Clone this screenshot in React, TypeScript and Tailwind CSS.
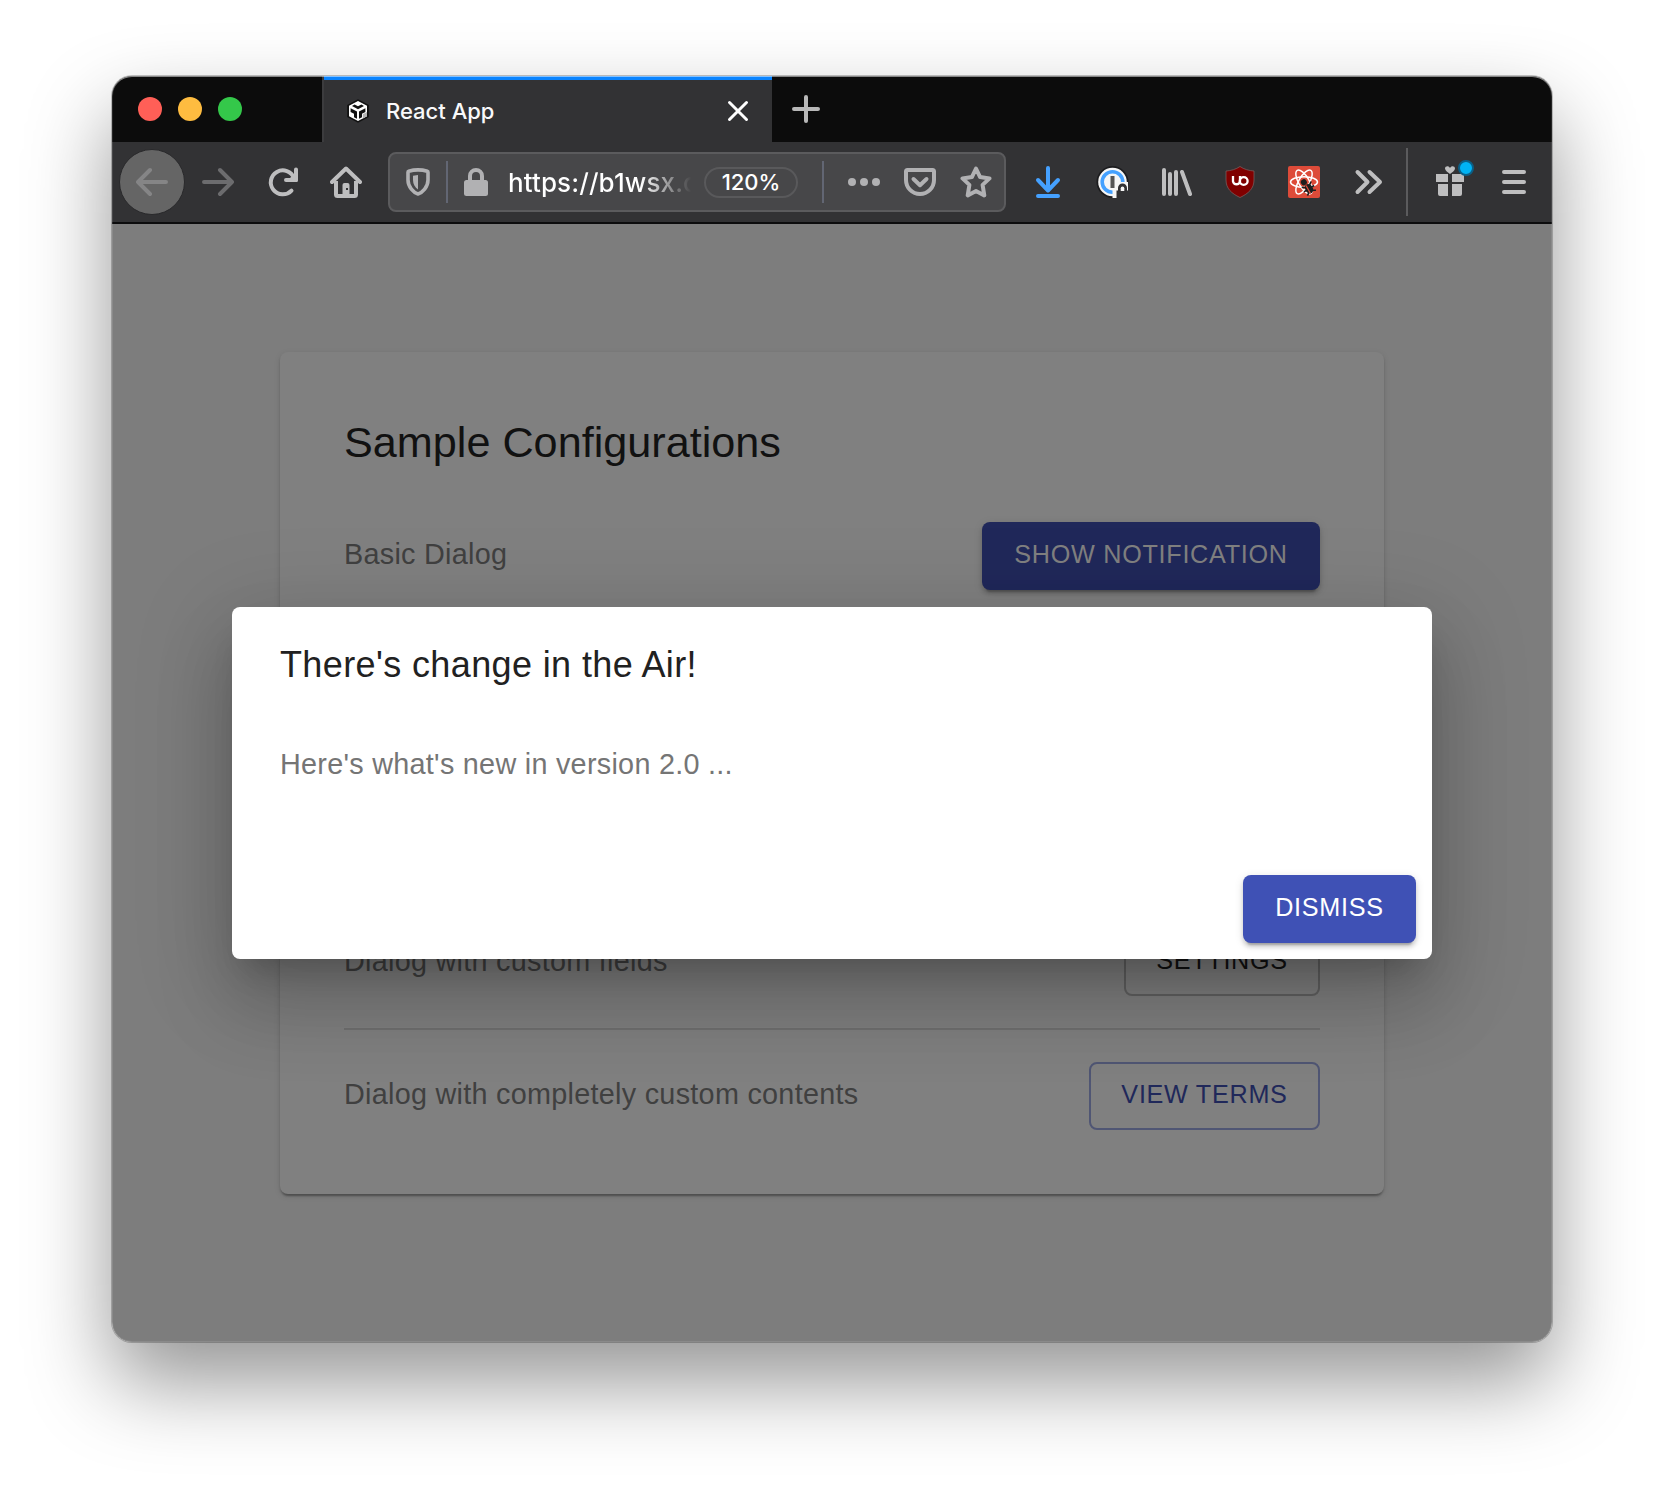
import React from "react";

const helv = "font-['Liberation_Sans',Arial,sans-serif]";

function Cube() {
  return (
    <svg width="24" height="24" viewBox="0 0 24 24" className="shrink-0">
      <path d="M12 .3 22.800 6v12L12 23.700 1.200 18V6z" fill="#111" />
      <path d="M12 2 21 6.700v10.600L12 22 3 17.300V6.700z" fill="#fff" />
      <path d="M12 10.200 6 7l2.600-1.400L12 7.300l3.400-1.700L18 7z" fill="#111" />
      <path d="M4.600 9.200 11 12.500v7.300l-3-1.600v-3.500l-3.400-1.800z" fill="#111" />
      <path d="M19.400 9.200 13 12.500v7.300l3-1.600v-3.500l3.400-1.800z" fill="#111" />
      <path d="m16.800 15.200 4.200-2.200v4.300l-4.200 2.200z" fill="#b5b5b5" />
    </svg>
  );
}

function Stroke({ d, w = 4, className }: { d: string; w?: number; className: string }) {
  return (
    <svg width="32" height="32" viewBox="0 0 32 32" fill="none" stroke="currentColor" strokeWidth={w} strokeLinecap="round" strokeLinejoin="round" className={`shrink-0 ${className}`}>
      <path d={d} />
    </svg>
  );
}

function Reload() {
  return (
    <svg width="32" height="32" viewBox="0 0 32 32" fill="none" className="shrink-0">
      <path d="M24.500 24.600A12 12 0 1 1 27 12" stroke="#bebebf" strokeWidth="4" strokeLinecap="round" />
      <path d="M31 3.500v11a1.500 1.500 0 0 1-1.500 1.500H19a2 2 0 0 1 0-4h4L27 8V3.500a2 2 0 0 1 4 0z" fill="#bebebf" />
    </svg>
  );
}

function Home() {
  return (
    <svg width="32" height="32" viewBox="0 0 32 32" fill="none" className="shrink-0">
      <path d="M2 16 16 2.500 30 16" stroke="#bebebf" strokeWidth="4" strokeLinecap="round" strokeLinejoin="round" />
      <path d="M6 15v13.500a1.500 1.500 0 0 0 1.500 1.500h17a1.500 1.500 0 0 0 1.500-1.500V15" stroke="#bebebf" strokeWidth="4" />
      <path d="M12.500 29V19a2 2 0 0 1 2-2h3a2 2 0 0 1 2 2v10z" fill="#bebebf" />
      <rect x="16" y="22" width="2" height="2" fill="#323234" />
    </svg>
  );
}

function Shield() {
  return (
    <svg width="24" height="28" viewBox="0 0 24 28" fill="none" className="shrink-0">
      <path d="M12 1.900c3.400 0 6.700.6 9.300 1.400a1 1 0 0 1 .7 1V12c0 7-5.600 12.800-10 14C7.600 24.800 2 19 2 12V4.300a1 1 0 0 1 .7-1C5.300 2.500 8.600 1.900 12 1.900z" stroke="#b1b1b3" strokeWidth="3.600" />
      <path d="M12 7v14.500C9 19.500 7 16 7 12V7.700Z" fill="#b1b1b3" />
    </svg>
  );
}

function Lock() {
  return (
    <svg width="24" height="28" viewBox="0 0 24 28" fill="none" className="shrink-0">
      <rect y="12" width="24" height="16" rx="2.500" fill="#b1b1b3" />
      <path d="M6 13V8a6 6 0 0 1 12 0v5" stroke="#b1b1b3" strokeWidth="4" />
    </svg>
  );
}

function Pocket() {
  return (
    <svg width="32" height="28" viewBox="0 0 32 28" fill="none" stroke="#b1b1b3" strokeWidth="4" strokeLinecap="round" strokeLinejoin="round" className="shrink-0">
      <path d="M3.500 2h25A1.500 1.500 0 0 1 30 3.500V12a14 14 0 0 1-28 0V3.500A1.500 1.500 0 0 1 3.500 2z" />
      <path d="m9.500 11 6.500 6.200L22.500 11" />
    </svg>
  );
}

function OnePassword() {
  return (
    <svg width="34" height="34" viewBox="0 0 34 34" fill="none" className="shrink-0">
      <circle cx="16.500" cy="17" r="16" fill="#1c1c1e" />
      <circle cx="16.500" cy="17" r="14.300" fill="#f6f6f6" />
      <circle cx="16.500" cy="17" r="10.300" stroke="#45a1ff" strokeWidth="3.600" />
      <rect x="14.500" y="11" width="4" height="12" fill="#555" />
      <path d="M16.500 33V24l4.500-1 4-6h7v16z" fill="#f6f6f6" />
      <path d="M20.500 34v-8.500h1.500V23a4.500 4.500 0 0 1 9 0v2.500H34V34z" fill="#323234" />
      <path d="M24.700 26V23.300a1.800 1.800 0 0 1 3.600 0V26z" fill="#f6f6f6" />
    </svg>
  );
}

function Library() {
  return (
    <svg width="32" height="32" viewBox="0 0 32 32" fill="none" stroke="#bebebf" strokeWidth="4" strokeLinecap="round" className="shrink-0">
      <path d="M4 4v24M10 8v20M16 6v22M22 6l8 22" />
    </svg>
  );
}

function UBlock() {
  return (
    <svg width="32" height="32" viewBox="0 0 32 32" fill="none" className="shrink-0">
      <path d="M16 .5c4 2.800 9 4.200 14 4.500v9c0 8.500-5.500 13.500-14 17.500C7.500 27.500 2 22.500 2 14V5C7 4.700 12 3.300 16 .5z" fill="#800000" stroke="#7d6666" strokeWidth=".7" />
      <path d="M9 10v5.500a3.600 3.600 0 0 0 7 0V10" stroke="#fff" strokeWidth="2.300" />
      <circle cx="19.700" cy="15" r="3.900" stroke="#fff" strokeWidth="2.300" />
    </svg>
  );
}

function ReactTools() {
  return (
    <svg width="32" height="32" viewBox="0 0 32 32" fill="none" className="shrink-0">
      <rect width="32" height="32" rx="2" fill="#dd4b39" />
      <g stroke="#fff" strokeWidth="1.500">
        <ellipse cx="16" cy="16" rx="13.500" ry="5.300" />
        <ellipse cx="16" cy="16" rx="13.500" ry="5.300" transform="rotate(60 16 16)" />
        <ellipse cx="16" cy="16" rx="13.500" ry="5.300" transform="rotate(120 16 16)" />
      </g>
      <g transform="rotate(-32 20 21)" fill="#1e1e1e" stroke="#1e1e1e">
        <ellipse cx="20" cy="23" rx="3.800" ry="5" stroke="none" />
        <circle cx="19" cy="14.800" r="3" stroke="none" />
        <path d="M14.500 18l3 2M25.500 18l-3 2M14 23h12M15 28l3-2M25 28l-3-2" strokeWidth="1.600" />
      </g>
      <path d="m18 19.500 4.500 8" stroke="#dd4b39" strokeWidth="1.300" />
    </svg>
  );
}

function Gift() {
  return (
    <span className="relative block h-8 w-8 shrink-0">
      <svg width="32" height="32" viewBox="0 0 32 32" fill="#bebebf">
        <path d="M2 8h12v8H2zM18 8h12v8H18zM4 18h10v12H6a2 2 0 0 1-2-2zM18 18h10v10a2 2 0 0 1-2 2h-8z" />
        <path d="M16 8c-2-1.500-5-3.500-5-5.500C11 .3 14.500-.8 16 2c1.500-2.800 5-1.700 5 .5C21 4.500 18 6.500 16 8z" />
      </svg>
      <span className="absolute -top-[6px] left-6 h-4 w-4 rounded-full border-2 border-[#0b5f86] bg-[#00b3f4]" />
    </span>
  );
}

function Button({ label, className }: { label: string; className: string }) {
  return (
    <button className={`h-[68px] shrink-0 rounded-[8px] pb-[3px] text-center text-[25.200px] tracking-[0.720px] ${helv} ${className}`}>{label}</button>
  );
}

function TabBar() {
  return (
    <div className="flex h-[66px] bg-[#0c0c0c]">
      <div className="flex w-[210px] items-center gap-4 pl-[26px]">
        <span className="h-6 w-6 rounded-full bg-[#ff5f57]" />
        <span className="h-6 w-6 rounded-full bg-[#febc40]" />
        <span className="h-6 w-6 rounded-full bg-[#34c84a]" />
      </div>
      <div className="flex w-[450px] border-l-2 border-[#3c3c3e] bg-[#323234]">
        <div className="flex grow items-center border-t-4 border-[#0a84ff] pl-[22px]">
          <Cube />
          <span className="ml-[16px] grow text-[22px] font-medium text-[#f9f9fa]">React App</span>
          <Stroke d="M7.500 7.500l17 17M24.500 7.500l-17 17" w={3} className="mr-[18px] text-white" />
        </div>
      </div>
      <div className="flex items-center pl-[18px]">
        <Stroke d="M16 4v24M4 16h24" className="text-[#b8b8b8]" />
      </div>
    </div>
  );
}

function Toolbar() {
  return (
    <div className="flex h-[82px] items-center border-b-2 border-[#0c0c0d] bg-[#323234] pl-[7px] *:shrink-0">
      <span className="flex h-[66px] w-[66px] items-center justify-center rounded-full border border-[#29292b] bg-[#656565]">
        <Stroke d="M30 16H2M14 4 2 16l12 12" className="text-[#858586]" />
      </span>
      <Stroke d="M2 16h28M18 4l12 12-12 12" className="ml-[17px] text-[#6c6c6e]" />
      <span className="ml-[33px]"><Reload /></span>
      <span className="ml-[31px]"><Home /></span>
      <div className="ml-[26px] flex h-[60px] w-[618px] items-center rounded-[8px] border-2 border-[#5b5b5d] bg-[#474749] pl-[16px] *:shrink-0">
        <Shield />
        <span className="ml-[16px] h-[42px] w-[2px] bg-[#626673]" />
        <span className="ml-[16px]"><Lock /></span>
        <span className="ml-[20px] w-[195px] bg-linear-to-r from-white from-68% to-transparent to-94% bg-clip-text pt-[1px] text-[26px] font-medium tracking-[0.100px] whitespace-nowrap text-transparent">https://b1wsx.c</span>
        <span className="ml-px flex h-[31px] w-[94px] items-center justify-center rounded-full border-2 border-[#59595b] pt-px text-[22px] font-medium text-white">120%</span>
        <span className="ml-[24px] h-[42px] w-[2px] bg-[#626673]" />
        <span className="ml-[24px] flex gap-1">
          <i className="h-2 w-2 rounded-full bg-[#b1b1b3]" />
          <i className="h-2 w-2 rounded-full bg-[#b1b1b3]" />
          <i className="h-2 w-2 rounded-full bg-[#b1b1b3]" />
        </span>
        <span className="ml-[24px]"><Pocket /></span>
        <Stroke d="M16 2.500l4.100 8.600 9.400 1.300-6.900 6.500 1.700 10.500L16 25l-8.300 4.400 1.700-10.500-6.900-6.500 9.400-1.300z" className="ml-6 text-[#b1b1b3]" />
      </div>
      <Stroke d="M16 2v22M6 14l10 10.500L26 14M6 30h20" className="ml-[26px] text-[#45a1ff]" />
      <span className="ml-[32px]"><OnePassword /></span>
      <span className="ml-[30px]"><Library /></span>
      <span className="ml-[32px]"><UBlock /></span>
      <span className="ml-[32px]"><ReactTools /></span>
      <Stroke d="M5.500 6l10 10-10 10M17.500 6l10.500 10-10.500 10" className="ml-[32px] text-[#bebebf]" />
      <span className="ml-[22px] h-[68px] w-[2px] bg-[#5b5b5d]" />
      <span className="ml-[26px]"><Gift /></span>
      <Stroke d="M6 6h20M6 16h20M6 26h20" className="ml-[32px] text-[#bebebf]" />
    </div>
  );
}

function SampleCard() {
  return (
    <div className={`mx-[168px] flex h-[842px] flex-col rounded-[8px] bg-[#808080] px-16 pb-16 shadow-[0_4px_2px_-2px_rgba(0,0,0,.2),0_2px_2px_rgba(0,0,0,.14),0_2px_6px_rgba(0,0,0,.12)] ${helv}`}>
      <h1 className="mt-[58px] text-[43.200px] leading-[64px] text-[#111]">Sample Configurations</h1>
      <div className="mt-12 flex justify-between">
        <span className="pt-[14px] text-[28.800px] leading-[36px] tracking-[0.270px] text-[#404040]">Basic Dialog</span>
        <Button label="SHOW NOTIFICATION" className="w-[338px] bg-[#20285a] text-[#808080] shadow-[0_6px_2px_-4px_rgba(0,0,0,.2),0_4px_4px_rgba(0,0,0,.14),0_2px_10px_rgba(0,0,0,.12)]" />
      </div>
      <div className="mt-auto flex justify-between border-b-2 border-[#707070] pb-8">
        <span className="pt-[15px] text-[28.800px] leading-[36px] tracking-[0.270px] text-[#404040]">Dialog with custom fields</span>
        <Button label="SETTINGS" className="w-[196px] border-2 border-[#626262] text-[#111]" />
      </div>
      <div className="mt-8 flex justify-between">
        <span className="pt-[14px] text-[28.800px] leading-[36px] tracking-[0.270px] text-[#404040]">Dialog with completely custom contents</span>
        <Button label="VIEW TERMS" className="w-[231px] border-2 border-[#505674] text-[#20285a]" />
      </div>
    </div>
  );
}

function Dialog() {
  return (
    <div role="dialog" className={`absolute top-[383px] left-[120px] flex h-[352px] w-[1200px] flex-col rounded-[8px] bg-white p-4 pl-12 shadow-[0_22px_30px_-14px_rgba(0,0,0,.2),0_48px_76px_6px_rgba(0,0,0,.14),0_18px_92px_16px_rgba(0,0,0,.12)] ${helv}`}>
      <h2 className="mt-[18px] text-[36px] leading-[48px] tracking-[0.380px] text-[#212121]">There's change in the Air!</h2>
      <p className="mt-[57px] text-[28.800px] leading-[36px] tracking-[0.270px] text-[#757575]">Here's what's new in version 2.0 ...</p>
      <Button label="DISMISS" className="mt-auto w-[173px] self-end bg-[#3f51b5] text-white shadow-[0_6px_2px_-4px_rgba(0,0,0,.2),0_4px_4px_rgba(0,0,0,.14),0_2px_10px_rgba(0,0,0,.12)]" />
    </div>
  );
}

export default function App() {
  return (
    <div className="h-[1490px] w-[1664px] overflow-hidden bg-white px-[112px] pt-[76px] font-[Inter,sans-serif]">
      <div className="relative h-[1266px] w-[1440px] rounded-[20px] shadow-[0_0_0_1px_rgba(0,0,0,.22),0_40px_84px_rgba(0,0,0,.42)]">
        <div className="h-full overflow-hidden rounded-[20px] bg-[#7d7d7d]">
          <TabBar />
          <Toolbar />
          <div className="relative h-[1118px] pt-[128px]">
            <SampleCard />
            <Dialog />
          </div>
        </div>
        <div className="pointer-events-none absolute inset-0 rounded-[20px] shadow-[inset_0_1px_0_rgba(255,255,255,.45),inset_0_0_0_1px_rgba(255,255,255,.1)]" />
      </div>
    </div>
  );
}
